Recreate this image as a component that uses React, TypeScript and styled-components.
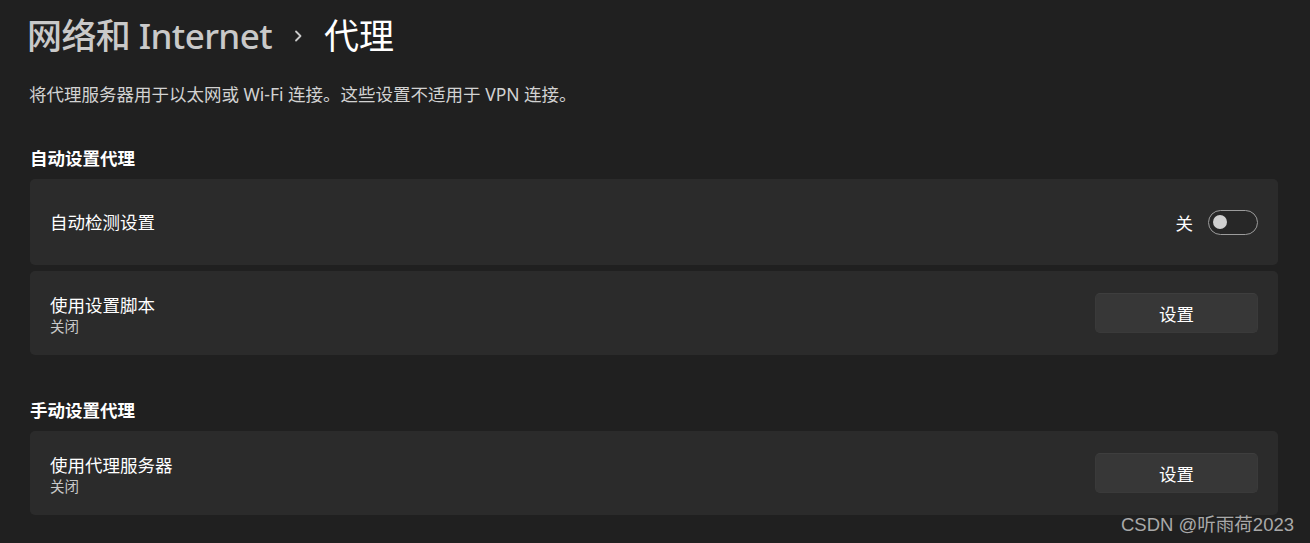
import styled, { createGlobalStyle } from "styled-components";

const GlobalStyle = createGlobalStyle`
    html, body {
        margin: 0;
        padding: 0;
        background: #202020;
    }
    body {
        font-family: "Noto Sans", "Noto Sans CJK SC", sans-serif;
        color: #ffffff;
        -webkit-font-smoothing: antialiased;
    }
`;

const Page = styled.div`
    position: relative;
    min-height: 543px;
    box-sizing: border-box;
    padding: 12px 32px 0 30px;
`;

const Breadcrumb = styled.div`
    display: flex;
    align-items: center;
    gap: 22px;
    height: 48px;
    margin-left: -3px;
    font-size: 35px;
    line-height: 48px;
`;

const Crumb = styled.span<{ $current?: boolean }>`
    color: ${(props) => (props.$current ? "#ffffff" : "#c9c9c9")};
    font-weight: ${(props) => (props.$current ? 400 : 500)};
    letter-spacing: ${(props) => (props.$current ? "0" : "-0.6px")};
`;

const Description = styled.p`
    margin: 22px 0 0 -1px;
    font-size: 17.5px;
    line-height: 24px;
    color: #d2d2d2;
`;

const SectionTitle = styled.h2<{ $first?: boolean }>`
    margin: ${(props) => (props.$first ? "40px" : "43px")} 0 9px 0;
    font-size: 17.5px;
    line-height: 24px;
    font-weight: 700;
    color: #ffffff;
`;

const CardList = styled.div`
    display: flex;
    flex-direction: column;
    gap: 6px;
`;

const Card = styled.div<{ $height: number }>`
    display: flex;
    align-items: center;
    justify-content: space-between;
    height: ${(props) => props.$height}px;
    box-sizing: border-box;
    padding: 0 20px;
    background: #2b2b2b;
    border-radius: 5px;
`;

const Labels = styled.div`
    display: flex;
    flex-direction: column;
    padding-top: 3px;
`;

const Label = styled.span`
    font-size: 17.5px;
    line-height: 23px;
    color: #ffffff;
`;

const Caption = styled.span`
    font-size: 14.5px;
    line-height: 19px;
    color: #c8c8c8;
`;

const ToggleGroup = styled.div`
    display: flex;
    align-items: center;
    gap: 15px;
    font-size: 17.5px;
    color: #ffffff;
`;

const Toggle = styled.div`
    position: relative;
    width: 50px;
    height: 25px;
    box-sizing: border-box;
    border: 1.5px solid #9c9c9c;
    border-radius: 13px;
    background: #272727;
`;

const Knob = styled.span`
    position: absolute;
    left: 4px;
    top: 4px;
    width: 14px;
    height: 14px;
    border-radius: 50%;
    background: #d0d0d0;
`;

const Button = styled.button`
    width: 163px;
    height: 40px;
    border: 1px solid #3a3a3a;
    border-top-color: #3e3e3e;
    border-radius: 5px;
    background: #373737;
    color: #ffffff;
    font-family: inherit;
    font-size: 17.5px;
    cursor: pointer;
`;

const Watermark = styled.div`
    position: absolute;
    right: 16px;
    bottom: 7px;
    font-family: "Liberation Sans", "Noto Sans CJK SC", sans-serif;
    font-size: 18.5px;
    color: #a9a9a9;
`;

const Chevron = () => (
    <svg width="8" height="12" viewBox="0 0 8 12">
        <polyline points="2,1.5 6.5,6 2,10.5" fill="none" stroke="#c9c9c9" strokeWidth="1.8" strokeLinecap="round" strokeLinejoin="round" />
    </svg>
);

const App = () => {
    return (
        <Page>
            <GlobalStyle />
            <Breadcrumb>
                <Crumb>网络和 Internet</Crumb>
                <Chevron />
                <Crumb $current>代理</Crumb>
            </Breadcrumb>
            <Description>将代理服务器用于以太网或 Wi-Fi 连接。这些设置不适用于 VPN 连接。</Description>

            <SectionTitle $first>自动设置代理</SectionTitle>
            <CardList>
                <Card $height={86}>
                    <Label>自动检测设置</Label>
                    <ToggleGroup>
                        关
                        <Toggle>
                            <Knob />
                        </Toggle>
                    </ToggleGroup>
                </Card>
                <Card $height={84}>
                    <Labels>
                        <Label>使用设置脚本</Label>
                        <Caption>关闭</Caption>
                    </Labels>
                    <Button>设置</Button>
                </Card>
            </CardList>

            <SectionTitle>手动设置代理</SectionTitle>
            <CardList>
                <Card $height={84}>
                    <Labels>
                        <Label>使用代理服务器</Label>
                        <Caption>关闭</Caption>
                    </Labels>
                    <Button>设置</Button>
                </Card>
            </CardList>

            <Watermark>CSDN @听雨荷2023</Watermark>
        </Page>
    );
};

export default App;
